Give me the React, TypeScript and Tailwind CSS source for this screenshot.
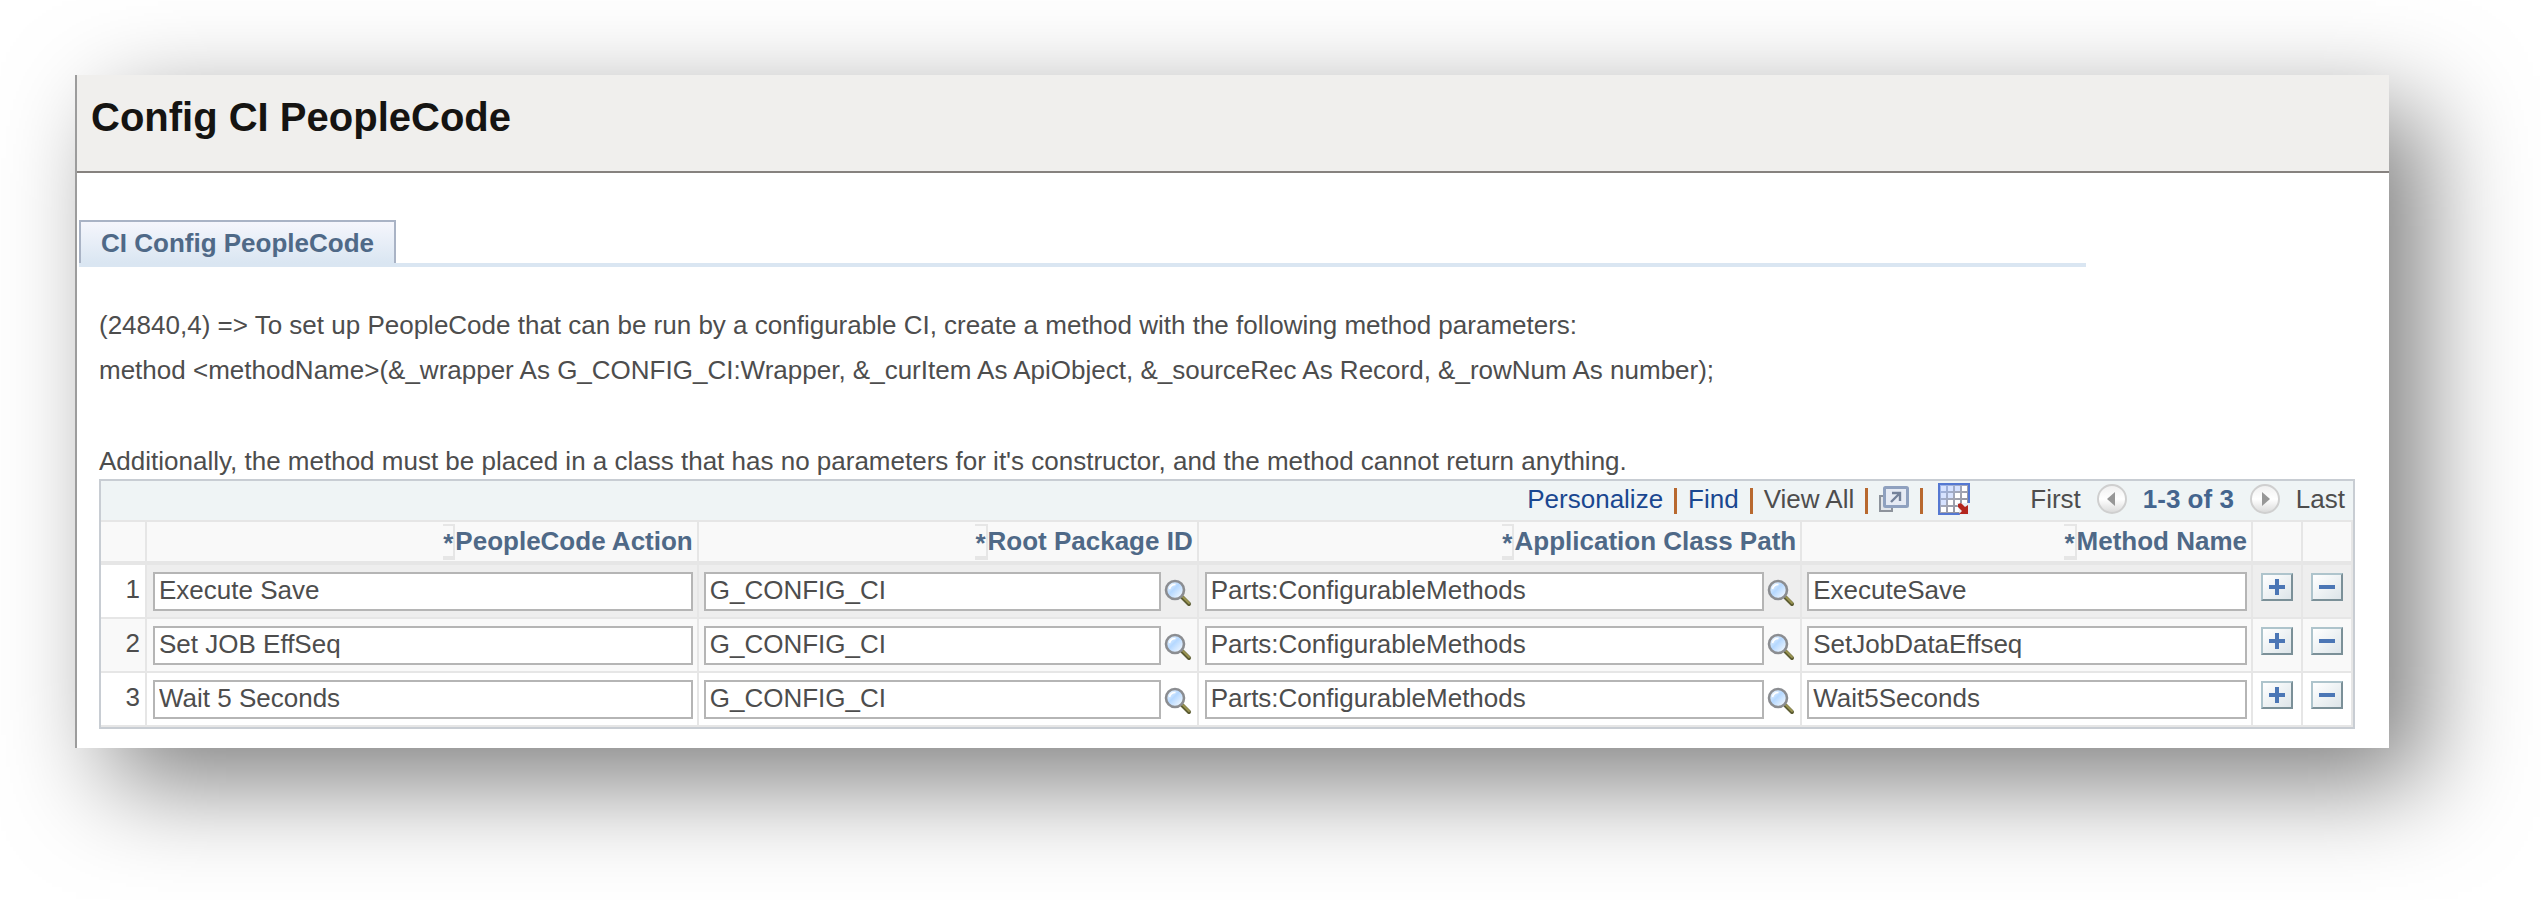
import React from 'react';

type Row = {
    action: string;
    rootPackage: string;
    classPath: string;
    method: string;
};

const ROWS: Row[] = [
    { action: 'Execute Save', rootPackage: 'G_CONFIG_CI', classPath: 'Parts:ConfigurableMethods', method: 'ExecuteSave' },
    { action: 'Set JOB EffSeq', rootPackage: 'G_CONFIG_CI', classPath: 'Parts:ConfigurableMethods', method: 'SetJobDataEffseq' },
    { action: 'Wait 5 Seconds', rootPackage: 'G_CONFIG_CI', classPath: 'Parts:ConfigurableMethods', method: 'Wait5Seconds' },
];

const COLUMNS = ['PeopleCode Action', 'Root Package ID', 'Application Class Path', 'Method Name'];

const ROW_BG = ['bg-[#eeeeee]', 'bg-[#f9f9f9]', 'bg-white'];

const SearchIcon = () => (
    <svg viewBox="0 0 28 28" className="h-7 w-7">
        <defs>
            <linearGradient id="lens" x1="0" y1="0" x2="1" y2="1">
                <stop offset="0.1" stopColor="#f4faff" />
                <stop offset="0.45" stopColor="#b5d8ff" />
                <stop offset="0.9" stopColor="#f4f9ff" />
            </linearGradient>
        </defs>
        <path d="M18 18l7 7" stroke="#5c5c32" strokeWidth="4" strokeLinecap="round" />
        <path d="M19 18l6 6" stroke="#9a9452" strokeWidth="2" strokeLinecap="round" />
        <circle cx="11" cy="11" r="9" fill="url(#lens)" stroke="#8b8d91" strokeWidth="2.6" />
        <path d="M5.500 10a6 6 0 0 1 6-4.500" stroke="#ffffff" strokeWidth="1.600" fill="none" />
    </svg>
);

const ZoomWindowIcon = () => (
    <svg viewBox="0 0 30 28" className="h-7 w-[30px]" fill="none">
        <rect x="1" y="11" width="12" height="15" fill="#e3e6ea" stroke="#8d939c" strokeWidth="2" />
        <rect x="5.500" y="2.500" width="23" height="19" rx="1" fill="#e6ebf4" stroke="#8fa1bf" strokeWidth="3" />
        <path d="M12 17l8-8M13 8h8v8" stroke="#74829a" strokeWidth="2.400" />
    </svg>
);

const GridIcon = () => (
    <svg viewBox="0 0 32 32" className="h-8 w-8" fill="none">
        <defs>
            <linearGradient id="sheet" x1="0" y1="0" x2="1" y2="1">
                <stop offset="0" stopColor="#9db8f4" />
                <stop offset="0.5" stopColor="#a2a5b2" />
                <stop offset="1" stopColor="#85858f" />
            </linearGradient>
        </defs>
        <rect x="1" y="1" width="30" height="30" fill="url(#sheet)" stroke="#5478d2" strokeWidth="2" />
        {[3, 10, 17, 24].map((y) =>
            [3, 10, 17, 24].map((x) => (
                <rect key={`${x}-${y}`} x={x} y={y} width="5" height="5" fill={x + y < 22 ? '#d6e2ff' : '#ffffff'} />
            ))
        )}
        <path d="M19 20h13v12H22z" fill="#e9eef5" />
        <path d="M20 21l3-1 4 4 3-2v9h-9l3-3-4-4z" fill="#b3261e" />
    </svg>
);

const PagerArrow = ({ back }: { back?: boolean }) => (
    <svg viewBox="0 0 30 30" className="h-[30px] w-[30px]">
        <defs>
            <linearGradient id="knob" x1="0" y1="0" x2="0" y2="1">
                <stop offset="0" stopColor="#efefef" />
                <stop offset="0.5" stopColor="#ffffff" />
                <stop offset="1" stopColor="#d9d9d9" />
            </linearGradient>
        </defs>
        <circle cx="15" cy="15" r="14" fill="url(#knob)" stroke="#cfcfcf" strokeWidth="2" />
        <path d={back ? 'M18 8v14l-8-7z' : 'M12 8v14l8-7z'} fill="#979797" />
    </svg>
);

const RowButton = ({ label, plus }: { label: string; plus?: boolean }) => (
    <button type="button" aria-label={label} className="block">
        <svg viewBox="0 0 32 28" className="h-7 w-8" fill="none">
            <defs>
                <linearGradient id="face" x1="0" y1="0" x2="1" y2="1">
                    <stop offset="0" stopColor="#ffffff" />
                    <stop offset="1" stopColor="#dde5e9" />
                </linearGradient>
            </defs>
            <rect width="32" height="28" fill="#aec4cc" />
            <path d="M32 0v28H0l2-2h28V2z" fill="#7b9098" />
            <rect x="2" y="2" width="28" height="24" fill="url(#face)" />
            <path d={plus ? 'M8 14h16M16 6v16' : 'M8 14h16'} stroke="#4b76b5" strokeWidth="4" />
        </svg>
    </button>
);

const Field = ({ label, value, lookup }: { label: string; value: string; lookup?: boolean }) => (
    <div className="flex items-center gap-[3px]">
        <input
            aria-label={label}
            defaultValue={value}
            className="h-[39px] min-w-0 flex-1 border-2 border-[#b5b5b5] bg-white px-1 pb-[2px] text-[26px] text-[#4d4d4d] outline-none"
        />
        {lookup && (
            <button type="button" aria-label={`Look up ${label}`} className="pt-1">
                <SearchIcon />
            </button>
        )}
    </div>
);

const Divider = () => <span className="mt-1 h-[26px] w-[3px] bg-[#b8692f]" />;

const App: React.FC = () => {
    return (
        <div className="min-h-screen overflow-hidden bg-white pt-[75px] pr-[152px] pb-[150px] pl-[75px] font-['Liberation_Sans',Arial,sans-serif] text-[26px] text-[#4d4d4d]">
            <main className="border-l-2 border-[#9c9c9c] bg-white pb-[19px] shadow-[35px_35px_96px_rgba(0,0,0,0.5)]">
                <header className="h-[98px] border-b-2 border-[#86827f] bg-[#f0efed] px-[14px] pt-[18px]">
                    <h1 className="text-[40px] leading-[48px] font-bold text-[#151412]">Config CI PeopleCode</h1>
                </header>

                {/* Page tabs */}
                <nav className="mt-[47px] mr-[303px] ml-[2px] flex border-b-4 border-[#dae6f2]">
                    <a
                        href="#config"
                        className="h-[43px] border-2 border-b-0 border-[#a9b3c5] bg-linear-to-b from-[#f5f6fc] to-[#dae6f2] px-5 pt-px leading-[40px] font-bold text-[#4f6987]"
                    >
                        CI Config PeopleCode
                    </a>
                </nav>

                <div className="mr-[34px] ml-[22px]">
                    <div className="pt-9 leading-[45px]">
                        <p>(24840,4) =&gt; To set up PeopleCode that can be run by a configurable CI, create a method with the following method parameters:</p>
                        <p>method &lt;methodName&gt;(&amp;_wrapper As G_CONFIG_CI:Wrapper, &amp;_curItem As ApiObject, &amp;_sourceRec As Record, &amp;_rowNum As number);</p>
                        <p className="pt-[50px] leading-[36px]">
                            Additionally, the method must be placed in a class that has no parameters for it's constructor, and the method cannot return anything.
                        </p>
                    </div>

                    <section className="border-2 border-[#c8cdd3]">
                        {/* Grid toolbar */}
                        <div className="flex h-[39px] items-center justify-end bg-[#eff4f5] pr-2 pb-[3px] leading-[36px]">
                            <div className="flex items-center gap-[11px]">
                                <a href="#personalize" className="text-[#1a4790]">Personalize</a>
                                <Divider />
                                <a href="#find" className="text-[#1a4790]">Find</a>
                                <Divider />
                                <span>View All</span>
                                <Divider />
                                <button type="button" aria-label="Zoom grid"><ZoomWindowIcon /></button>
                                <Divider />
                                <button type="button" aria-label="Download to Excel" className="ml-1"><GridIcon /></button>
                            </div>
                            <div className="ml-[60px] flex items-center gap-4">
                                <span>First</span>
                                <button type="button" aria-label="Previous rows"><PagerArrow back /></button>
                                <span className="font-bold text-[#44658e]">1-3 of 3</span>
                                <button type="button" aria-label="Next rows"><PagerArrow /></button>
                                <span>Last</span>
                            </div>
                        </div>

                        <table className="w-full table-fixed border-separate border-spacing-0">
                            <colgroup>
                                <col className="w-[46px]" />
                                <col className="w-[24.5%]" />
                                <col className="w-[22.2%]" />
                                <col className="w-[26.8%]" />
                                <col />
                                <col className="w-[50px]" />
                                <col className="w-[50px]" />
                            </colgroup>
                            <thead>
                                <tr className="h-[45px] bg-[#f9f9f9] text-[#4f6987]">
                                    <td className="border-t-2 border-r-2 border-b-4 border-[#e6e6e6]" />
                                    {COLUMNS.map((name) => (
                                        <th key={name} scope="col" className="border-t-2 border-r-2 border-b-4 border-[#e6e6e6] p-0 pr-1">
                                            <div className="flex justify-end leading-[38px]">
                                                <span className="mt-[2px] mb-px h-9 border-t-2 border-r-2 border-b-4 border-[#e6e6e6] leading-[34px]">*</span>
                                                {name}
                                            </div>
                                        </th>
                                    ))}
                                    <td className="border-t-2 border-r-2 border-b-4 border-[#e6e6e6]" />
                                    <td className="border-t-2 border-r-2 border-b-4 border-[#e6e6e6]" />
                                </tr>
                            </thead>
                            <tbody>
                                {ROWS.map((row, i) => (
                                    <tr key={row.action} className={`h-[54px] ${ROW_BG[i % 3]}`}>
                                        <td className={`border-r-2 border-b-2 border-[#e6e6e6] p-0 pr-[5px] pb-1 text-right ${i === 0 ? 'bg-white' : ''}`}>
                                            {i + 1}
                                        </td>
                                        <td className="border-r-2 border-b-2 border-[#e6e6e6] p-0 pr-1 pl-[6px]">
                                            <Field label={COLUMNS[0]} value={row.action} />
                                        </td>
                                        <td className="border-r-2 border-b-2 border-[#e6e6e6] p-0 pr-[5px] pl-[5px]">
                                            <Field label={COLUMNS[1]} value={row.rootPackage} lookup />
                                        </td>
                                        <td className="border-r-2 border-b-2 border-[#e6e6e6] p-0 pr-[5px] pl-[6px]">
                                            <Field label={COLUMNS[2]} value={row.classPath} lookup />
                                        </td>
                                        <td className="border-r-2 border-b-2 border-[#e6e6e6] p-0 pr-1 pl-[5px]">
                                            <Field label={COLUMNS[3]} value={row.method} />
                                        </td>
                                        <td className="border-r-2 border-b-2 border-[#e6e6e6] p-0 pt-2 pl-2 align-top">
                                            <RowButton label={`Add row after ${i + 1}`} plus />
                                        </td>
                                        <td className="border-r-2 border-b-2 border-[#e6e6e6] p-0 pt-2 pl-2 align-top">
                                            <RowButton label={`Delete row ${i + 1}`} />
                                        </td>
                                    </tr>
                                ))}
                            </tbody>
                        </table>
                    </section>
                </div>
            </main>
        </div>
    );
};

export default App;
